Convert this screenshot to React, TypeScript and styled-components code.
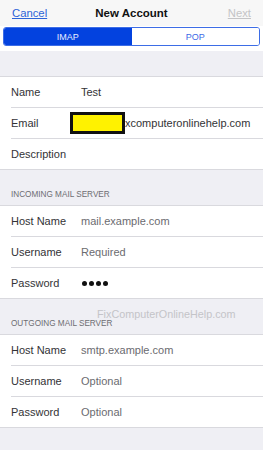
import styled, { createGlobalStyle } from "styled-components";

const GlobalStyle = createGlobalStyle`
    html, body {
        margin: 0;
        padding: 0;
        background: #efeff4;
        font-family: "Liberation Sans", Arial, sans-serif;
    }
`;

type Field = {
    label: string;
    value?: string;
    kind?: "text" | "placeholder" | "password" | "redacted";
};

const accountFields: Field[] = [
    { label: "Name", value: "Test", kind: "text" },
    { label: "Email", value: "xcomputeronlinehelp.com", kind: "redacted" },
    { label: "Description" },
];

const incomingFields: Field[] = [
    { label: "Host Name", value: "mail.example.com", kind: "placeholder" },
    { label: "Username", value: "Required", kind: "placeholder" },
    { label: "Password", kind: "password" },
];

const outgoingFields: Field[] = [
    { label: "Host Name", value: "smtp.example.com", kind: "placeholder" },
    { label: "Username", value: "Optional", kind: "placeholder" },
    { label: "Password", value: "Optional", kind: "placeholder" },
];

const FieldValue = ({ field }: { field: Field }) => {
    if (field.kind === "password") {
        return (
            <Dots>
                <Dot />
                <Dot />
                <Dot />
                <Dot />
            </Dots>
        );
    }
    if (field.kind === "redacted") {
        return (
            <Value $muted={false}>
                <Redact />
                {field.value}
            </Value>
        );
    }
    if (!field.value) return null;
    return <Value $muted={field.kind === "placeholder"}>{field.value}</Value>;
};

const Group = ({ fields }: { fields: Field[] }) => (
    <Rows>
        {fields.map((f, i) => (
            <Row key={f.label + i}>
                <Label>{f.label}</Label>
                <FieldValue field={f} />
            </Row>
        ))}
    </Rows>
);

export default function App() {
    return (
        <Page>
            <GlobalStyle />
            <NavBar>
                <NavLink>Cancel</NavLink>
                <Title>New Account</Title>
                <NavLink $disabled>Next</NavLink>
            </NavBar>
            <SegmentWrap>
                <Segment>
                    <SegButton $active>IMAP</SegButton>
                    <SegButton>POP</SegButton>
                </Segment>
            </SegmentWrap>

            <Spacer $h={25} />
            <Group fields={accountFields} />

            <SectionHeader>INCOMING MAIL SERVER</SectionHeader>
            <Group fields={incomingFields} />

            <SectionHeader>
                OUTGOING MAIL SERVER
                <Watermark>FixComputerOnlineHelp.com</Watermark>
            </SectionHeader>
            <Group fields={outgoingFields} />
        </Page>
    );
}

const Page = styled.div`
    width: 263px;
    height: 450px;
    overflow: hidden;
    background: #efeff4;
`;

const NavBar = styled.div`
    height: 26px;
    background: #f7f7f7;
    display: flex;
    align-items: center;
    justify-content: space-between;
    padding: 0 12px;
`;

const NavLink = styled.span<{ $disabled?: boolean }>`
    font-size: 11.3px;
    color: ${(p) => (p.$disabled ? "#c4c4c6" : "#2d63d8")};
    text-decoration: underline;
    width: 40px;
    text-align: ${(p) => (p.$disabled ? "right" : "left")};
`;

const Title = styled.span`
    font-size: 11.5px;
    font-weight: bold;
    color: #111;
`;

const SegmentWrap = styled.div`
    background: #ffffff;
    padding: 1px 3px 5px;
`;

const Segment = styled.div`
    display: flex;
    height: 19px;
    border: 1px solid #3d6de6;
    border-radius: 3px;
    overflow: hidden;
    box-sizing: border-box;
`;

const SegButton = styled.div<{ $active?: boolean }>`
    flex: 1;
    display: flex;
    align-items: center;
    justify-content: center;
    font-size: 9px;
    background: ${(p) => (p.$active ? "#0342df" : "#ffffff")};
    color: ${(p) => (p.$active ? "#e8eeff" : "#3c6ae6")};
`;

const Spacer = styled.div<{ $h: number }>`
    height: ${(p) => p.$h}px;
`;

const Rows = styled.div`
    background: #ffffff;
    border-top: 1px solid #d9d9de;
    border-bottom: 1px solid #d9d9de;
    padding-left: 11px;
`;

const Row = styled.div`
    height: 30px;
    display: flex;
    align-items: center;
    & + & {
        border-top: 1px solid #d9d9de;
    }
`;

const Label = styled.span`
    width: 70px;
    font-size: 11px;
    color: #333336;
`;

const Value = styled.span<{ $muted: boolean }>`
    display: flex;
    align-items: center;
    font-size: 11px;
    color: ${(p) => (p.$muted ? "#6b6b70" : "#333336")};
`;

const Redact = styled.span`
    display: inline-block;
    width: 49px;
    height: 16px;
    margin-left: -11px;
    background: #fff200;
    border: 3px solid #111;
`;

const Dots = styled.span`
    display: flex;
    gap: 2px;
    padding-left: 1px;
`;

const Dot = styled.span`
    width: 5px;
    height: 5px;
    border-radius: 50%;
    background: #111;
`;

const SectionHeader = styled.div`
    position: relative;
    height: 35px;
    box-sizing: border-box;
    padding: 0 11px 6px;
    display: flex;
    align-items: flex-end;
    font-size: 8.2px;
    color: #6d6d72;
`;

const Watermark = styled.span`
    position: absolute;
    left: 97px;
    top: 9px;
    font-size: 10.8px;
    color: #c4c4c8;
    white-space: nowrap;
`;
